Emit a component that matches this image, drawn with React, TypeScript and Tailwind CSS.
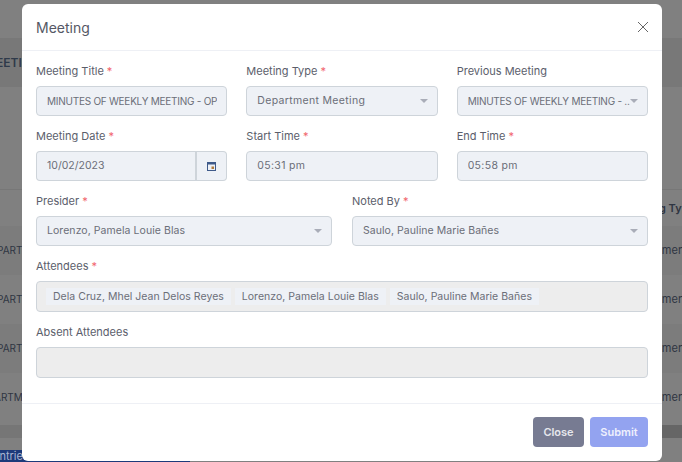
const FONT = "font-['Inter','Noto_Sans',sans-serif]"

function Label({ text, required }: { text: string; required?: boolean }) {
  return (
    <div className="mb-[7px] h-[16px] text-[11px] leading-[16px] text-[#5b5e6b]">
      {text}
      {required && <span className="ml-[3px] text-[#f1646c]">*</span>}
    </div>
  )
}

function Caret() {
  return <span className="ml-auto h-0 w-0 shrink-0 border-x-[4px] border-t-[4px] border-x-transparent border-t-[#a9adb8]" />
}

function Box({ value, select, upper, wide }: { value: string; select?: boolean; upper?: boolean; wide?: boolean }) {
  return (
    <div className="flex h-[30px] items-center rounded-[4px] border border-[#ced4da] bg-[#eef1f6] pl-[10px] pr-[9px] text-[#6b6e78]">
      <span
        className={`overflow-hidden whitespace-nowrap ${
          upper ? 'text-[10px] tracking-[-0.25px]' : wide ? 'text-[10.5px] tracking-[0.33px]' : 'text-[10.5px] tracking-[0.06px]'
        }`}
      >
        {value}
      </span>
      {select && <Caret />}
    </div>
  )
}

function BackdropRow({ left, shift, stripe }: { left: string; shift: string; stripe: string }) {
  return (
    <div className={`flex h-[49px] items-center justify-between overflow-hidden text-[10px] text-[#2f3542] ${stripe}`}>
      <span className={shift}>{left}</span>
      <span className="-mr-[6px] text-[11px]">Department</span>
    </div>
  )
}

export default function App() {
  const attendees = ['Dela Cruz, Mhel Jean Delos Reyes', 'Lorenzo, Pamela Louie Blas', 'Saulo, Pauline Marie Bañes']
  return (
    <div className={`relative h-[462px] w-[682px] overflow-hidden bg-[#808080] ${FONT}`}>
      <div className="pt-[38px]">
        <div className="flex h-[49px] items-center bg-[#787878] text-[12px] font-semibold text-[#2f3a4a]">
          <span className="-ml-[15px]">MEETING</span>
        </div>
        <div className="h-[103px] border-b border-[#777]" />
        <div className="flex h-[36px] items-center justify-end overflow-hidden text-[11px] font-semibold text-[#2f3542]">
          <span className="-mr-[13px]">Meeting Type</span>
        </div>
        <BackdropRow left="PARTMENT" shift="-ml-[3px]" stripe="bg-[#7c7c7c]" />
        <BackdropRow left="PARTMENT" shift="-ml-[3px]" stripe="bg-[#808080]" />
        <BackdropRow left="PARTMENT" shift="-ml-[3px]" stripe="bg-[#7c7c7c]" />
        <BackdropRow left="ARTMENT" shift="-ml-[6px]" stripe="bg-[#808080]" />
        <div className="mt-[3px] flex h-[13px]">
          <div className="flex-1 bg-[#767676]" />
          <div className="w-[20px] bg-[#666]" />
        </div>
      </div>
      <div className="absolute bottom-0 left-0 h-[12px] w-[190px] overflow-hidden bg-[#1d3a7a] text-[11px] leading-[12px] text-[#a9b4d0]">
        <span className="-ml-[7px] inline-block">entries</span>
      </div>

      <div className="absolute left-[22px] top-[4px] flex h-[457px] w-[640px] flex-col rounded-[6px] bg-white">
        <div className="flex h-[47px] items-center justify-between border-b border-[#eef0f5] px-[14px]">
          <div className="text-[14px] text-[#555865]">Meeting</div>
          <svg width="10" height="10" viewBox="0 0 10 10" fill="none" stroke="#666" strokeWidth="1">
            <path d="M0 0l10 10M10 0L0 10" />
          </svg>
        </div>

        <div className="flex-1 px-[14px] pt-[12px]">
          <div className="grid grid-cols-3 gap-x-[19px] gap-y-[12px]">
            <div>
              <Label text="Meeting Title" required />
              <Box value="MINUTES OF WEEKLY MEETING - OP" upper />
            </div>
            <div>
              <Label text="Meeting Type" required />
              <Box value="Department Meeting" select wide />
            </div>
            <div>
              <Label text="Previous Meeting" />
              <Box value="MINUTES OF WEEKLY MEETING - ..." select upper />
            </div>
            <div>
              <Label text="Meeting Date" required />
              <div className="flex h-[30px]">
                <div className="flex flex-1 items-center rounded-l-[4px] border border-r-2 border-[#ced4da] bg-[#eef1f6] pl-[10px] text-[10.5px] text-[#6b6e78]">10/02/2023</div>
                <div className="flex w-[30px] items-center justify-center rounded-r-[4px] border border-l-0 border-[#ced4da] bg-[#eef1f6]">
                  <svg width="9" height="10" viewBox="0 0 9 10">
                    <rect x="0.5" y="1.5" width="8" height="8" fill="none" stroke="#3f5a8a" />
                    <rect x="0.5" y="1" width="8" height="2.5" fill="#3f5a8a" />
                    <rect x="4.5" y="5.5" width="2.5" height="2.5" fill="#b07a3a" />
                  </svg>
                </div>
              </div>
            </div>
            <div>
              <Label text="Start Time" required />
              <Box value="05:31 pm" wide />
            </div>
            <div>
              <Label text="End Time" required />
              <Box value="05:58 pm" wide />
            </div>
          </div>

          <div className="mt-[12px] grid grid-cols-2 gap-x-[20px]">
            <div>
              <Label text="Presider" required />
              <Box value="Lorenzo, Pamela Louie Blas" select />
            </div>
            <div>
              <Label text="Noted By" required />
              <Box value="Saulo, Pauline Marie Bañes" select />
            </div>
          </div>

          <div className="mt-[12px]">
            <Label text="Attendees" required />
            <div className="flex h-[31px] items-center gap-[4px] rounded-[4px] border border-[#ced4da] bg-[#ededed] pl-[9px]">
              {attendees.map((a) => (
                <span key={a} className="flex h-[17px] items-center bg-[#eef1f6] px-[7px] text-[10.5px] tracking-[0.02px] text-[#6b6e78]">{a}</span>
              ))}
            </div>
          </div>

          <div className="mt-[12px]">
            <Label text="Absent Attendees" />
            <div className="h-[31px] rounded-[4px] border border-[#ced4da] bg-[#ededed]" />
          </div>
        </div>

        <div className="flex h-[58px] items-start justify-end gap-[6px] border-t border-[#eef0f5] px-[14px] pt-[13px]">
          <button className="h-[30px] w-[51px] rounded-[4px] bg-[#777b92] text-[11px] font-semibold text-[#e6e7ec]">Close</button>
          <button className="h-[30px] w-[58px] rounded-[4px] bg-[#93a3f0] text-[11px] font-semibold text-[#eef0fd]">Submit</button>
        </div>
      </div>
    </div>
  )
}
